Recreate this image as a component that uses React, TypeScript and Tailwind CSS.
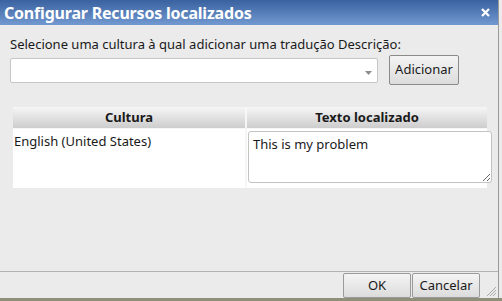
import React from "react";

const font = "font-['Noto_Sans','Open_Sans',sans-serif]";

export default function App() {
  return (
    <div className={`relative flex h-[301px] w-[502px] flex-col overflow-hidden bg-[#ebebeb] text-[#1a1a1a] ${font}`}>
      <div className="flex w-[499px] flex-1 flex-col border-r border-[#9a9a9a]">
        {/* title bar */}
        <div className="flex h-[25px] shrink-0 items-center justify-between bg-gradient-to-b from-[#3a62a0] to-[#7299d0] pl-[4px] pr-[8px]">
          <span className="text-[16px] font-bold leading-none tracking-[-0.2px] text-white">
            Configurar Recursos localizados
          </span>
          <svg width="9" height="9" viewBox="0 0 9 9" className="mt-[-1px]">
            <path d="M1 1L8 8M8 1L1 8" stroke="white" strokeWidth="2.2" />
          </svg>
        </div>

        {/* body */}
        <div className="flex-1 px-[10px] pt-[11px]">
          <div className="text-[13px] leading-[16px]">
            Selecione uma cultura à qual adicionar uma tradução Descrição:
          </div>
          <div className="mt-[3px] flex h-[30px] items-center">
            <div className="relative h-[25px] w-[368px] rounded-[2px] border border-[#c6c6c6] bg-white">
              <svg width="7" height="4" viewBox="0 0 7 4" className="absolute right-[5px] top-[12px]">
                <path d="M0 0H7L3.5 4Z" fill="#8c8c8c" />
              </svg>
            </div>
            <button className="ml-[11px] h-[30px] w-[70px] rounded-[2px] border border-[#8a8a8a] bg-gradient-to-b from-[#f4f4f4] to-[#dcdcdc] text-[13px] text-[#1a1a1a]">
              Adicionar
            </button>
          </div>

          {/* table */}
          <div className="ml-[3px] mt-[22px] grid w-[474px] grid-cols-[232px_240px] gap-x-[2px] gap-y-[1px] bg-[#f6f6f6]">
            <div className="flex h-[21px] items-center justify-center bg-gradient-to-b from-[#f6f6f6] to-[#cdcdcd] text-[13px] font-bold">
              Cultura
            </div>
            <div className="flex h-[21px] items-center justify-center bg-gradient-to-b from-[#f6f6f6] to-[#cdcdcd] text-[13px] font-bold">
              Texto localizado
            </div>
            <div className="h-[59px] bg-white pl-[1px] pt-[4px] text-[13px] leading-[16px]">
              English (United States)
            </div>
            <div className="relative h-[59px] bg-white">
              <textarea
                readOnly
                defaultValue="This is my problem"
                className="absolute left-[1px] top-[2px] h-[52px] w-[244px] resize rounded-[3px] border border-[#c3c3c3] bg-white px-[4px] py-[4px] text-[13px] leading-[16px] outline-none"
              />
            </div>
          </div>
        </div>

        {/* footer */}
        <div className="relative flex h-[27px] shrink-0 items-start justify-end border-t border-[#b2b2b2] pr-[18px] pt-[1px]">
          <button className="h-[25px] w-[68px] rounded-[2px] border border-[#9a9a9a] bg-gradient-to-b from-[#f4f4f4] to-[#dcdcdc] text-[13px]">
            OK
          </button>
          <button className="ml-[1px] h-[25px] w-[68px] rounded-[2px] border border-[#9a9a9a] bg-gradient-to-b from-[#f4f4f4] to-[#dcdcdc] text-[13px]">
            Cancelar
          </button>
          <svg width="12" height="12" viewBox="0 0 12 12" className="absolute bottom-[1px] right-[1px]">
            <path d="M11 2L2 11M11 5L5 11M11 8L8 11" stroke="#a8a8a8" strokeWidth="1" />
          </svg>
        </div>
      </div>
      <div className="h-[3px] w-full shrink-0 bg-[#8f8f7a]" />
    </div>
  );
}
